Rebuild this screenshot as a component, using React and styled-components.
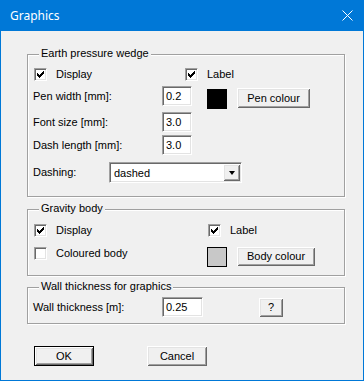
import React from 'react';
import styled, { createGlobalStyle } from 'styled-components';

const GlobalStyle = createGlobalStyle`
  html, body {
    margin: 0;
    padding: 0;
    background: #f0f0f0;
  }
  body {
    font-family: "Liberation Sans", Arial, sans-serif;
    font-size: 11px;
    color: #000;
  }
`;

const Window = styled.div`
  width: 364px;
  height: 381px;
  display: flex;
  flex-direction: column;
`;

const TitleBar = styled.div`
  height: 31px;
  flex-shrink: 0;
  background: #0078d7;
  color: #fff;
  display: flex;
  align-items: center;
  justify-content: space-between;
  padding: 0 11px 0 10px;
  font-family: "Noto Sans", "Open Sans", sans-serif;
  font-size: 12px;
`;

const Body = styled.div`
  flex: 1;
  background: #f0f0f0;
  border: 1px solid #0078d7;
  border-top: none;
  padding: 23px 0 0 26px;
`;

const Group = styled.div`
  position: relative;
  width: 318px;
  box-sizing: border-box;
  border: 1px solid #a0a0a0;
  box-shadow: inset 1px 1px 0 #fff, 1px 1px 0 #fff;
  padding: ${p => p.$pad};
  margin-top: ${p => p.$mt || 0}px;
  display: flex;
  flex-direction: column;
`;

const Legend = styled.span`
  position: absolute;
  top: -8px;
  left: 11px;
  padding: 0 2px;
  line-height: 13px;
  background: #f0f0f0;
  white-space: nowrap;
`;

const Row = styled.div`
  display: flex;
  align-items: ${p => p.$align || 'center'};
  margin-top: ${p => p.$mt || 0}px;
`;

const Text = styled.span`
  width: ${p => (p.$w ? `${p.$w}px` : 'auto')};
  flex-shrink: 0;
  line-height: 13px;
  white-space: nowrap;
`;

const CheckItem = styled.label`
  display: flex;
  align-items: center;
  width: ${p => (p.$w ? `${p.$w}px` : 'auto')};
  margin-left: 1px;
  gap: 9px;
  line-height: 13px;
  white-space: nowrap;
`;

const Box = styled.span`
  width: 13px;
  height: 13px;
  box-sizing: border-box;
  flex-shrink: 0;
  background: #fff;
  border: 1px solid;
  border-color: #a0a0a0 #fff #fff #a0a0a0;
  box-shadow: inset 1px 1px 0 #696969, inset -1px -1px 0 #e3e3e3;
  display: flex;
  align-items: center;
  justify-content: center;
`;

const Field = styled.div`
  width: ${p => p.$w}px;
  height: 20px;
  box-sizing: border-box;
  flex-shrink: 0;
  background: #fff;
  border: 1px solid;
  border-color: #a0a0a0 #fff #fff #a0a0a0;
  box-shadow: inset 1px 1px 0 #696969, inset -1px -1px 0 #e3e3e3;
  padding: 0 0 0 3px;
  display: flex;
  align-items: center;
  margin-left: ${p => p.$ml || 0}px;
`;

const Select = styled(Field)`
  height: 21px;
  justify-content: space-between;
  padding: 2px 1px 2px 4px;
`;

const ArrowButton = styled.span`
  width: 17px;
  height: 17px;
  box-sizing: border-box;
  background: #f0f0f0;
  box-shadow: inset 1px 1px 0 #fff, inset -1px -1px 0 #696969,
    inset 2px 2px 0 #e3e3e3, inset -2px -2px 0 #a0a0a0;
  display: flex;
  align-items: center;
  justify-content: center;

  &::after {
    content: '';
    border-left: 3.5px solid transparent;
    border-right: 3.5px solid transparent;
    border-top: 4px solid #000;
    margin-top: 1px;
  }
`;

const Swatch = styled.span`
  width: 20px;
  height: 20px;
  box-sizing: border-box;
  flex-shrink: 0;
  background: ${p => p.$color};
  border: 1px solid #000;
  margin-top: ${p => p.$mt || 0}px;
  margin-left: ${p => p.$ml || 0}px;
`;

const Button = styled.button`
  width: ${p => p.$w}px;
  height: ${p => p.$h || 20}px;
  box-sizing: border-box;
  flex-shrink: 0;
  padding: 0;
  margin: ${p => p.$mt || 0}px 0 0 ${p => p.$ml || 0}px;
  background: #f0f0f0;
  border: ${p => (p.$default ? '1px solid #000' : 'none')};
  box-shadow: inset 1px 1px 0 #fff, inset -1px -1px 0 #696969,
    inset 2px 2px 0 #e3e3e3, inset -2px -2px 0 #a0a0a0;
  font-family: "Liberation Sans", Arial, sans-serif;
  font-size: 11px;
  color: #000;
  line-height: 13px;
`;

const Footer = styled.div`
  display: flex;
  margin: 22px 0 0 7px;
`;

const CheckMark = () => (
  <svg width="7" height="7" viewBox="0 0 7 7" shapeRendering="crispEdges">
    {[2, 3, 4, 3, 2, 1, 0].map((y, x) => (
      <rect key={x} x={x} y={y} width="1" height="3" fill="#000" />
    ))}
  </svg>
);

const Check = ({ checked, label, w }) => (
  <CheckItem $w={w}>
    <Box>{checked && <CheckMark />}</Box>
    {label}
  </CheckItem>
);

const CloseIcon = () => (
  <svg width="11" height="11" viewBox="0 0 11 11">
    <path d="M0.5 0.5 L10.5 10.5 M10.5 0.5 L0.5 10.5" stroke="#fff" strokeWidth="1" />
  </svg>
);

export default function App() {
  return (
    <Window>
      <GlobalStyle />
      <TitleBar>
        <span>Graphics</span>
        <CloseIcon />
      </TitleBar>
      <Body>
        <Group $pad="13px 0 13px 5px">
          <Legend>Earth pressure wedge</Legend>
          <Row>
            <Check checked label="Display" w={150} />
            <Check checked label="Label" />
          </Row>
          <Row $mt={5} $align="flex-start">
            <Text $w={129} style={{ lineHeight: '20px' }}>Pen width [mm]:</Text>
            <Field $w={30}>0.2</Field>
            <Swatch $color="#000" $mt={3} $ml={15} />
            <Button $w={73} $mt={2} $ml={10}>Pen colour</Button>
          </Row>
          <Row $mt={3}>
            <Text $w={129}>Font size [mm]:</Text>
            <Field $w={30}>3.0</Field>
          </Row>
          <Row $mt={3}>
            <Text $w={129}>Dash length [mm]:</Text>
            <Field $w={30}>3.0</Field>
          </Row>
          <Row $mt={7}>
            <Text $w={76}>Dashing:</Text>
            <Select $w={133}>
              dashed
              <ArrowButton />
            </Select>
          </Row>
        </Group>

        <Group $mt={12} $pad="14px 0 8px 5px">
          <Legend>Gravity body</Legend>
          <Row>
            <Check checked label="Display" w={173} />
            <Check checked label="Label" />
          </Row>
          <Row $mt={10} $align="flex-start">
            <Check label="Coloured body" w={173} />
            <Swatch $color="#c8c8c8" />
            <Button $w={78} $h={19} $ml={10}>Body colour</Button>
          </Row>
        </Group>

        <Group $mt={11} $pad="9px 0 6px 5px">
          <Legend>Wall thickness for graphics</Legend>
          <Row>
            <Text $w={129}>Wall thickness [m]:</Text>
            <Field $w={41}>0.25</Field>
            <Button $w={24} $h={19} $ml={56}>?</Button>
          </Row>
        </Group>

        <Footer>
          <Button $w={60} $default>OK</Button>
          <Button $w={60} $ml={53}>Cancel</Button>
        </Footer>
      </Body>
    </Window>
  );
}
